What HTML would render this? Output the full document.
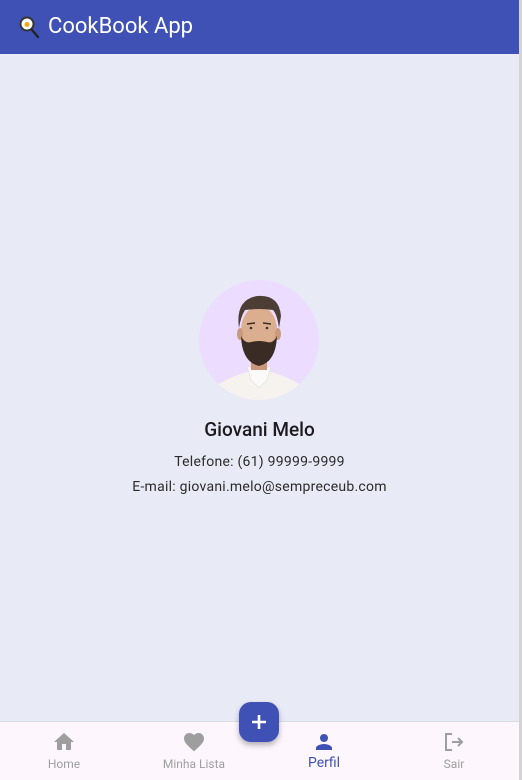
<!DOCTYPE html>
<html><head><meta charset="utf-8"><style>
*{margin:0;padding:0;box-sizing:border-box}
body{width:522px;height:780px;overflow:hidden;background:#e8eaf6;font-family:"Roboto","Liberation Sans",sans-serif;position:relative}
.bar{position:absolute;left:0;top:0;width:519px;height:54px;background:#3f51b5;color:#fff;font-size:22px;display:flex;align-items:center}
.bar .t{position:absolute;left:48px;top:14px}
.sb{position:absolute;right:0;top:0;width:3px;height:780px;background:#d4d4d4}
.name{position:absolute;left:0;width:519px;top:418px;text-align:center;font-size:19px;font-weight:500;color:#1d1b20}
.l{position:absolute;left:0;width:519px;text-align:center;font-size:14px;color:#2b2b2b;letter-spacing:.25px}
.nav{position:absolute;left:0;top:721px;width:519px;height:59px;background:#fdf7fd;border-top:1px solid #ddd}
.it{position:absolute;top:8px;width:130px;text-align:center;font-size:12px;color:#9e9e9e}
.it svg{display:block;margin:0 auto 3px}
.fab{position:absolute;left:239px;top:702px;width:40px;height:40px;border-radius:12px;background:#3f51b5;box-shadow:0 3px 6px rgba(0,0,0,.3)}
</style></head><body>
<div class="bar">
<svg style="position:absolute;left:18px;top:15px" width="22" height="24" viewBox="0 0 22 24"><circle cx="9" cy="9" r="7.5" fill="#333"/><circle cx="9" cy="9" r="5.5" fill="#fff"/><circle cx="9" cy="9.5" r="2.5" fill="#f7a21b"/><line x1="14" y1="15" x2="20" y2="22" stroke="#222" stroke-width="2.2" stroke-linecap="round"/></svg>
<span class="t">CookBook App</span></div>
<div class="sb"></div>
<svg style="position:absolute;left:199px;top:280px" width="120" height="120" viewBox="0 0 120 120">
<defs><clipPath id="c"><circle cx="60" cy="60" r="60"/></clipPath></defs>
<circle cx="60" cy="60" r="60" fill="#ecdcff"/>
<g clip-path="url(#c)">
<path d="M10 120 L20 104 Q40 92 60 90 Q80 92 100 104 L110 120Z" fill="#f6f3ef"/>
<path d="M50 88 L60 108 L70 88Z" fill="#e6c2a8"/>
<path d="M48 86 L52 100 L60 108 L68 100 L72 86 Q60 92 48 86Z" fill="#fbfaf8" stroke="#ddd" stroke-width=".6"/>
<rect x="52" y="70" width="16" height="20" fill="#c9987c"/>
<ellipse cx="60" cy="50" rx="18" ry="24" fill="#dcae90"/>
<ellipse cx="41" cy="54" rx="3" ry="6" fill="#c99a7c"/><ellipse cx="79" cy="54" rx="3" ry="6" fill="#c99a7c"/>
<path d="M42 56 Q43 82 60 86 Q77 82 78 56 Q74 64 68 62 Q60 60 52 62 Q46 64 42 56Z" fill="#3a2c24"/>
<path d="M40 48 Q36 20 58 16 Q80 14 82 36 L80 48 Q78 34 74 30 Q60 28 46 30 Q42 36 40 48Z" fill="#4c3d35"/>
<path d="M48 44 l8 -1 M64 43 l8 1" stroke="#3d2d25" stroke-width="1.6"/>
<circle cx="52" cy="48" r="1.3" fill="#333"/><circle cx="68" cy="48" r="1.3" fill="#333"/>
</g></svg>
<div class="name">Giovani Melo</div>
<div class="l" style="top:454px">Telefone: (61) 99999-9999</div>
<div class="l" style="top:479px">E-mail: giovani.melo@sempreceub.com</div>
<div class="nav">
<div class="it" style="left:-1px"><svg width="24" height="24" viewBox="0 0 24 24"><path d="M10 20v-6h4v6h5v-8h3L12 3 2 12h3v8z" fill="#9e9e9e"/></svg>Home</div>
<div class="it" style="left:129px"><svg width="24" height="24" viewBox="0 0 24 24"><path d="M12 21.35l-1.45-1.32C5.4 15.36 2 12.28 2 8.5 2 5.420 4.42 3 7.5 3c1.74 0 3.41.81 4.5 2.09C13.090 3.81 14.76 3 16.5 3 19.58 3 22 5.42 22 8.5c0 3.78-3.4 6.86-8.55 11.54L12 21.35z" fill="#9e9e9e"/></svg>Minha Lista</div>
<div class="it" style="left:259px;color:#3f51b5;font-size:14px;top:8px"><svg width="24" height="24" viewBox="0 0 24 24" style="margin-bottom:1px"><path d="M12 12c2.21 0 4-1.79 4-4s-1.790-4-4-4-4 1.79-4 4 1.79 4 4 4zm0 2c-2.67 0-8 1.34-8 4v2h16v-2c0-2.66-5.33-4-8-4z" fill="#3f51b5"/></svg>Perfil</div>
<div class="it" style="left:389px"><svg width="24" height="24" viewBox="0 0 24 24"><path d="M10 4H4v16h6" fill="none" stroke="#9e9e9e" stroke-width="2"/><path d="M10 12h10M16 8l4 4-4 4" fill="none" stroke="#9e9e9e" stroke-width="2"/></svg>Sair</div>
</div>
<div class="fab"><svg width="40" height="40" viewBox="0 0 40 40"><path d="M20 13v14M13 20h14" stroke="#fff" stroke-width="2.6"/></svg></div>
</body></html>
